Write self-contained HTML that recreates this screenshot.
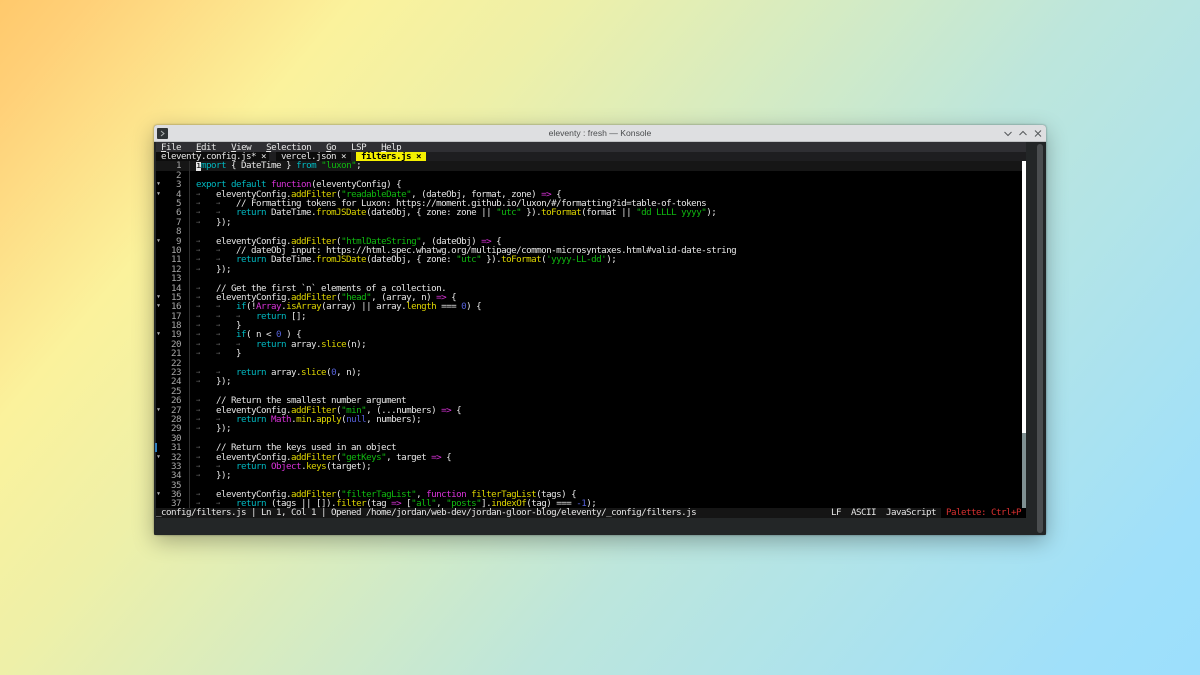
<!DOCTYPE html>
<html><head><meta charset="utf-8"><style>
*{margin:0;padding:0;box-sizing:border-box}
html,body{width:1200px;height:675px;overflow:hidden}
body{background:linear-gradient(130deg,#ffc96c 0%,#ffd078 5%,#fbf29c 20%,#eef0a8 32%,#d4ebc4 48%,#bde6dc 62%,#a0e0fa 92%,#9cdffc 100%);position:relative;font-family:"DejaVu Sans Mono","Liberation Mono",monospace}
.a{position:absolute}
#win{left:154px;top:125px;width:892px;height:410px;background:#232627;border-radius:3px 3px 1px 1px;overflow:hidden}
#sh{left:154px;top:125px;width:892px;height:410px;border-radius:3px;box-shadow:0 6px 22px rgba(0,0,0,.3),0 0 2px rgba(0,0,0,.4)}
#tb{left:0;top:0;width:892px;height:17px;background:#dedfe1;border-bottom:1px solid #bfc1c3}
#ttl{left:0;top:0;width:892px;height:17px;text-align:center;font:8.6px/17px "Liberation Sans",sans-serif;color:#4a4c4e;filter:blur(.25px)}
.t{font-size:9.2px;letter-spacing:-.53px;line-height:9.39px;margin-top:.2px;white-space:pre;color:#e6e6e6;position:absolute;filter:blur(.25px)}
.t.ln{text-align:right;width:24px;left:157px;color:#a8a8a8}
.c{left:196px}
.k{color:#00b8c0}.m{color:#d832d8}.f{color:#dcd400}.s{color:#10b810}.n{color:#5560d8}.d{color:#5c5c5c;font-size:7px}
.u{text-decoration:underline}
.fo{left:157px;font-size:5px;color:#aaa;position:absolute;line-height:9.39px;margin-top:.2px}
</style></head><body>
<div class="a" id="sh"></div>
<div class="a" id="win">
<div class="a" id="tb"></div>
<div class="a" id="ttl">eleventy : fresh — Konsole</div>
<div class="a" style="left:3px;top:3px;width:11px;height:11px;background:#2f3436;border-radius:1px"></div>
<svg class="a" style="left:3px;top:3px" width="11" height="11"><path d="M4 3l3 2.5L4 8" fill="none" stroke="#aeb2b2" stroke-width="1"/></svg>
<svg class="a" style="left:849px;top:3px" width="40" height="11" fill="none" stroke="#55585a" stroke-width="1"><path d="M1.500 4l3.500 3.500L8.500 4"/><path d="M16.500 7l3.500-3.500L23.500 7"/><path d="M32 2.500l6 6M38 2.500l-6 6"/></svg>
</div>
<div class="a" style="left:156px;top:142px;width:870px;height:10px;background:#2f2f33"></div>
<div class="a" style="left:156px;top:152px;width:870px;height:9px;background:#1e1e20"></div>
<div class="a" style="left:156px;top:161px;width:866px;height:347px;background:#000"></div>
<div class="a" style="left:156px;top:161px;width:866px;height:10px;background:#161616"></div>
<div class="a" style="left:1022px;top:161px;width:4px;height:272px;background:#fff"></div>
<div class="a" style="left:1022px;top:433px;width:4px;height:75px;background:#7f9092"></div>
<div class="a" style="left:1037px;top:144px;width:6px;height:389px;background:#4a4d4f;border-radius:3px"></div>
<div class="a" style="left:189px;top:161px;width:1px;height:347px;background:#2e2e2e"></div>
<div class="a" style="left:155px;top:443px;width:2px;height:9px;background:#2f7fc0"></div>
<div class="a" style="left:156px;top:508px;width:870px;height:10px;background:#151515"></div>
<div class="a" style="left:941px;top:508px;width:85px;height:10px;background:#000"></div>
<div class="a" style="left:156px;top:152px;width:113px;height:9px;background:#0c0c0c"></div>
<div class="a" style="left:276px;top:152px;width:75px;height:9px;background:#0c0c0c"></div>
<div class="a" style="left:356px;top:152px;width:70px;height:9px;background:#f5f000"></div>
<div class="a" style="left:196px;top:161.500px;width:5px;height:9px;background:#e8e8e8"></div>

<div class="t" style="left:161px;top:142.800px"><span class="u">F</span>ile   <span class="u">E</span>dit   <span class="u">V</span>iew   <span class="u">S</span>election   <span class="u">G</span>o   LSP   <span class="u">H</span>elp</div>
<div class="t" style="left:161px;top:152.300px">eleventy.config.js* ×</div>
<div class="t" style="left:281px;top:152.300px">vercel.json ×</div>
<div class="t" style="left:361px;top:152.300px;color:#000;font-weight:bold">filters.js ×</div>

<div class="t ln" style="top:161.300px">1</div><div class="t ln" style="top:170.700px">2</div><div class="t ln" style="top:180.100px">3</div><div class="t ln" style="top:189.500px">4</div><div class="t ln" style="top:198.900px">5</div><div class="t ln" style="top:208.300px">6</div><div class="t ln" style="top:217.600px">7</div><div class="t ln" style="top:227px">8</div><div class="t ln" style="top:236.400px">9</div><div class="t ln" style="top:245.800px">10</div><div class="t ln" style="top:255.200px">11</div><div class="t ln" style="top:264.600px">12</div><div class="t ln" style="top:274px">13</div><div class="t ln" style="top:283.400px">14</div><div class="t ln" style="top:292.800px">15</div><div class="t ln" style="top:302.200px">16</div><div class="t ln" style="top:311.500px">17</div><div class="t ln" style="top:320.900px">18</div><div class="t ln" style="top:330.300px">19</div><div class="t ln" style="top:339.700px">20</div><div class="t ln" style="top:349.100px">21</div><div class="t ln" style="top:358.500px">22</div><div class="t ln" style="top:367.900px">23</div><div class="t ln" style="top:377.300px">24</div><div class="t ln" style="top:386.700px">25</div><div class="t ln" style="top:396.100px">26</div><div class="t ln" style="top:405.400px">27</div><div class="t ln" style="top:414.800px">28</div><div class="t ln" style="top:424.200px">29</div><div class="t ln" style="top:433.600px">30</div><div class="t ln" style="top:443px">31</div><div class="t ln" style="top:452.400px">32</div><div class="t ln" style="top:461.800px">33</div><div class="t ln" style="top:471.200px">34</div><div class="t ln" style="top:480.600px">35</div><div class="t ln" style="top:490px">36</div><div class="t ln" style="top:499.300px">37</div>

<div class="fo" style="top:180.100px">▼</div><div class="fo" style="top:189.500px">▼</div><div class="fo" style="top:236.400px">▼</div><div class="fo" style="top:292.800px">▼</div><div class="fo" style="top:302.200px">▼</div><div class="fo" style="top:330.300px">▼</div><div class="fo" style="top:405.400px">▼</div><div class="fo" style="top:452.400px">▼</div><div class="fo" style="top:490px">▼</div>

<div class="t c" style="top:161.300px"><span style="color:#000">i</span><span class="k">mport</span> { DateTime } <span class="k">from</span> <span class="s">"luxon"</span>;</div>
<div class="t c" style="top:180.100px"><span class="k">export default</span> <span class="m">function</span>(eleventyConfig) {</div>
<div class="t c" style="top:189.500px">    eleventyConfig.<span class="f">addFilter</span>(<span class="s">"readableDate"</span>, (dateObj, format, zone) <span class="m">=&gt;</span> {</div>
<div class="t c" style="top:198.900px">        // Formatting tokens for Luxon: https://moment.github.io/luxon/#/formatting?id=table-of-tokens</div>
<div class="t c" style="top:208.300px">        <span class="k">return</span> DateTime.<span class="f">fromJSDate</span>(dateObj, { zone: zone || <span class="s">"utc"</span> }).<span class="f">toFormat</span>(format || <span class="s">"dd LLLL yyyy"</span>);</div>
<div class="t c" style="top:217.600px">    });</div>
<div class="t c" style="top:236.400px">    eleventyConfig.<span class="f">addFilter</span>(<span class="s">"htmlDateString"</span>, (dateObj) <span class="m">=&gt;</span> {</div>
<div class="t c" style="top:245.800px">        // dateObj input: https://html.spec.whatwg.org/multipage/common-microsyntaxes.html#valid-date-string</div>
<div class="t c" style="top:255.200px">        <span class="k">return</span> DateTime.<span class="f">fromJSDate</span>(dateObj, { zone: <span class="s">"utc"</span> }).<span class="f">toFormat</span>(<span class="s">'yyyy-LL-dd'</span>);</div>
<div class="t c" style="top:264.600px">    });</div>
<div class="t c" style="top:283.400px">    // Get the first `n` elements of a collection.</div>
<div class="t c" style="top:292.800px">    eleventyConfig.<span class="f">addFilter</span>(<span class="s">"head"</span>, (array, n) <span class="m">=&gt;</span> {</div>
<div class="t c" style="top:302.200px">        <span class="k">if</span>(!<span class="m">Array</span>.<span class="f">isArray</span>(array) || array.<span class="f">length</span> === <span class="n">0</span>) {</div>
<div class="t c" style="top:311.500px">            <span class="k">return</span> [];</div>
<div class="t c" style="top:320.900px">        }</div>
<div class="t c" style="top:330.300px">        <span class="k">if</span>( n &lt; <span class="n">0</span> ) {</div>
<div class="t c" style="top:339.700px">            <span class="k">return</span> array.<span class="f">slice</span>(n);</div>
<div class="t c" style="top:349.100px">        }</div>
<div class="t c" style="top:367.900px">        <span class="k">return</span> array.<span class="f">slice</span>(<span class="n">0</span>, n);</div>
<div class="t c" style="top:377.300px">    });</div>
<div class="t c" style="top:396.100px">    // Return the smallest number argument</div>
<div class="t c" style="top:405.400px">    eleventyConfig.<span class="f">addFilter</span>(<span class="s">"min"</span>, (...numbers) <span class="m">=&gt;</span> {</div>
<div class="t c" style="top:414.800px">        <span class="k">return</span> <span class="m">Math</span>.<span class="f">min</span>.<span class="f">apply</span>(<span class="n">null</span>, numbers);</div>
<div class="t c" style="top:424.200px">    });</div>
<div class="t c" style="top:443px">    // Return the keys used in an object</div>
<div class="t c" style="top:452.400px">    eleventyConfig.<span class="f">addFilter</span>(<span class="s">"getKeys"</span>, target <span class="m">=&gt;</span> {</div>
<div class="t c" style="top:461.800px">        <span class="k">return</span> <span class="m">Object</span>.<span class="f">keys</span>(target);</div>
<div class="t c" style="top:471.200px">    });</div>
<div class="t c" style="top:490px">    eleventyConfig.<span class="f">addFilter</span>(<span class="s">"filterTagList"</span>, <span class="m">function</span> <span class="f">filterTagList</span>(tags) {</div>
<div class="t c" style="top:499.300px">        <span class="k">return</span> (tags || []).<span class="f">filter</span>(tag <span class="m">=&gt;</span> [<span class="s">"all"</span>, <span class="s">"posts"</span>].<span class="f">indexOf</span>(tag) === <span class="n">-1</span>);</div>

<div class="t d" style="left:196px;top:189.500px;letter-spacing:0;font-size:7px">→</div><div class="t d" style="left:196px;top:198.900px;letter-spacing:0;font-size:7px">→</div><div class="t d" style="left:216px;top:198.900px;letter-spacing:0;font-size:7px">→</div><div class="t d" style="left:196px;top:208.300px;letter-spacing:0;font-size:7px">→</div><div class="t d" style="left:216px;top:208.300px;letter-spacing:0;font-size:7px">→</div><div class="t d" style="left:196px;top:217.600px;letter-spacing:0;font-size:7px">→</div><div class="t d" style="left:196px;top:236.400px;letter-spacing:0;font-size:7px">→</div><div class="t d" style="left:196px;top:245.800px;letter-spacing:0;font-size:7px">→</div><div class="t d" style="left:216px;top:245.800px;letter-spacing:0;font-size:7px">→</div><div class="t d" style="left:196px;top:255.200px;letter-spacing:0;font-size:7px">→</div><div class="t d" style="left:216px;top:255.200px;letter-spacing:0;font-size:7px">→</div><div class="t d" style="left:196px;top:264.600px;letter-spacing:0;font-size:7px">→</div><div class="t d" style="left:196px;top:283.400px;letter-spacing:0;font-size:7px">→</div><div class="t d" style="left:196px;top:292.800px;letter-spacing:0;font-size:7px">→</div><div class="t d" style="left:196px;top:302.200px;letter-spacing:0;font-size:7px">→</div><div class="t d" style="left:216px;top:302.200px;letter-spacing:0;font-size:7px">→</div><div class="t d" style="left:196px;top:311.500px;letter-spacing:0;font-size:7px">→</div><div class="t d" style="left:216px;top:311.500px;letter-spacing:0;font-size:7px">→</div><div class="t d" style="left:236px;top:311.500px;letter-spacing:0;font-size:7px">→</div><div class="t d" style="left:196px;top:320.900px;letter-spacing:0;font-size:7px">→</div><div class="t d" style="left:216px;top:320.900px;letter-spacing:0;font-size:7px">→</div><div class="t d" style="left:196px;top:330.300px;letter-spacing:0;font-size:7px">→</div><div class="t d" style="left:216px;top:330.300px;letter-spacing:0;font-size:7px">→</div><div class="t d" style="left:196px;top:339.700px;letter-spacing:0;font-size:7px">→</div><div class="t d" style="left:216px;top:339.700px;letter-spacing:0;font-size:7px">→</div><div class="t d" style="left:236px;top:339.700px;letter-spacing:0;font-size:7px">→</div><div class="t d" style="left:196px;top:349.100px;letter-spacing:0;font-size:7px">→</div><div class="t d" style="left:216px;top:349.100px;letter-spacing:0;font-size:7px">→</div><div class="t d" style="left:196px;top:367.900px;letter-spacing:0;font-size:7px">→</div><div class="t d" style="left:216px;top:367.900px;letter-spacing:0;font-size:7px">→</div><div class="t d" style="left:196px;top:377.300px;letter-spacing:0;font-size:7px">→</div><div class="t d" style="left:196px;top:396.100px;letter-spacing:0;font-size:7px">→</div><div class="t d" style="left:196px;top:405.400px;letter-spacing:0;font-size:7px">→</div><div class="t d" style="left:196px;top:414.800px;letter-spacing:0;font-size:7px">→</div><div class="t d" style="left:216px;top:414.800px;letter-spacing:0;font-size:7px">→</div><div class="t d" style="left:196px;top:424.200px;letter-spacing:0;font-size:7px">→</div><div class="t d" style="left:196px;top:443px;letter-spacing:0;font-size:7px">→</div><div class="t d" style="left:196px;top:452.400px;letter-spacing:0;font-size:7px">→</div><div class="t d" style="left:196px;top:461.800px;letter-spacing:0;font-size:7px">→</div><div class="t d" style="left:216px;top:461.800px;letter-spacing:0;font-size:7px">→</div><div class="t d" style="left:196px;top:471.200px;letter-spacing:0;font-size:7px">→</div><div class="t d" style="left:196px;top:490px;letter-spacing:0;font-size:7px">→</div><div class="t d" style="left:196px;top:499.300px;letter-spacing:0;font-size:7px">→</div><div class="t d" style="left:216px;top:499.300px;letter-spacing:0;font-size:7px">→</div>

<div class="t" style="left:156px;top:508.200px">_config/filters.js | Ln 1, Col 1 | Opened /home/jordan/web-dev/jordan-gloor-blog/eleventy/_config/filters.js</div>
<div class="t" style="left:831px;top:508.200px">LF</div>
<div class="t" style="left:851px;top:508.200px">ASCII</div>
<div class="t" style="left:886px;top:508.200px">JavaScript</div>
<div class="t" style="left:946px;top:508.200px;color:#d83030">Palette: Ctrl+P</div>
</body></html>
